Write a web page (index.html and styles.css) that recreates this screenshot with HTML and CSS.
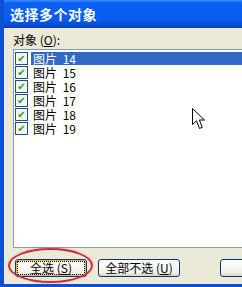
FILE: index.html
```html
<!DOCTYPE html>
<html lang="zh">
<head>
    <meta charset="UTF-8">
    <title>选择多个对象</title>
    <link rel="stylesheet" href="styles.css">
</head>
<body>
    <div class="window">
        <div class="titlebar">选择多个对象</div>
        <div class="content">
            <div class="label">对象 (<u>O</u>):</div>
            <div class="listbox">
                <div class="row selected"><span class="check">✔</span><span class="name">图片 14</span></div>
                <div class="row"><span class="check">✔</span><span class="name">图片 15</span></div>
                <div class="row"><span class="check">✔</span><span class="name">图片 16</span></div>
                <div class="row"><span class="check">✔</span><span class="name">图片 17</span></div>
                <div class="row"><span class="check">✔</span><span class="name">图片 18</span></div>
                <div class="row"><span class="check">✔</span><span class="name">图片 19</span></div>
            </div>
            <div class="buttons">
                <button class="btn btn-all"><span class="focus">全选 (<u>S</u>)</span></button>
                <button class="btn btn-none">全部不选 (<u>U</u>)</button>
                <button class="btn btn-ok"></button>
            </div>
        </div>
        <!-- 红色圈注 -->
        <div class="ring"></div>
        <svg class="cursor" width="14" height="22" viewBox="0 0 14 22">
            <path d="M0.5 0.5 L0.5 16.5 L4.5 12.8 L7.5 20.5 L10.3 19.3 L7.4 12 L12.5 12 Z" fill="#fff" stroke="#000" stroke-width="1"/>
        </svg>
    </div>
</body>
</html>
```

FILE: styles.css
```css
* {
    box-sizing: border-box;
    margin: 0;
    padding: 0;
}

body {
    width: 242px;
    height: 287px;
    overflow: hidden;
    background: #ece9d8;
    font-family: "Noto Sans CJK SC", "DejaVu Sans", sans-serif;
    font-size: 12px;
    color: #000;
}

.window {
    position: relative;
    width: 242px;
    height: 287px;
    overflow: hidden;
    border-left: 4px solid #0a4fd6;
    border-bottom: 3px solid #0a4fd6;
    display: flex;
    flex-direction: column;
}

.titlebar {
    height: 28px;
    padding-left: 6px;
    display: flex;
    align-items: center;
    color: #fff;
    font-size: 14px;
    font-weight: bold;
    letter-spacing: 0.5px;
    background: linear-gradient(#3d8cf7 0, #0a62f2 3px, #0a5cee 20px, #0346c8 27px, #02389e 28px);
}

.content {
    flex: 1;
    background: #ece9d8;
    padding: 4px 0 0 9px;
    display: flex;
    flex-direction: column;
}

.label {
    height: 17px;
    line-height: 16px;
}

.listbox {
    height: 199px;
    margin-right: -20px;
    background: #fff;
    border: 1px solid #7f9db9;
    border-right: none;
    padding-top: 1px;
}

.row {
    height: 14px;
    display: flex;
    align-items: center;
    padding-left: 1px;
}

.check {
    width: 13px;
    height: 13px;
    border: 1px solid #1c5180;
    background: #f4f4ee;
    color: #21a121;
    font-size: 10px;
    line-height: 11px;
    text-align: center;
    font-family: "DejaVu Sans", sans-serif;
    font-weight: bold;
    margin-right: 3px;
}

.name {
    flex: 1;
    height: 13px;
    line-height: 13px;
    padding-left: 2px;
    word-spacing: 3px;
}

.row.selected .name {
    background: #316ac5;
    color: #fff;
}

.buttons {
    margin-top: 11px;
    display: flex;
    gap: 11px;
    padding-left: 2px;
}

.btn {
    flex-shrink: 0;
    height: 18px;
    border: 1px solid #003c74;
    border-radius: 3px;
    background: linear-gradient(#ffffff, #f0f0ea 80%, #d6d0c5);
    font-family: "Noto Sans CJK SC", "DejaVu Sans", sans-serif;
    font-size: 12px;
    line-height: 14px;
    color: #000;
}

.btn-all {
    width: 72px;
    padding: 1px;
    box-shadow: inset 0 0 0 1px #f8b33a;
}

.btn-all .focus {
    display: block;
    height: 14px;
    border: 1px dotted #000;
    line-height: 12px;
}

.btn-none {
    width: 82px;
}

.btn-ok {
    width: 60px;
    margin-left: 29px;
}

.ring {
    position: absolute;
    left: 4px;
    top: 248px;
    width: 85px;
    height: 35px;
    border: 2px solid #c9303a;
    border-radius: 50%;
    box-shadow: 0 0 2px rgba(200, 40, 50, 0.4);
}

.cursor {
    position: absolute;
    left: 188px;
    top: 108px;
}
```
